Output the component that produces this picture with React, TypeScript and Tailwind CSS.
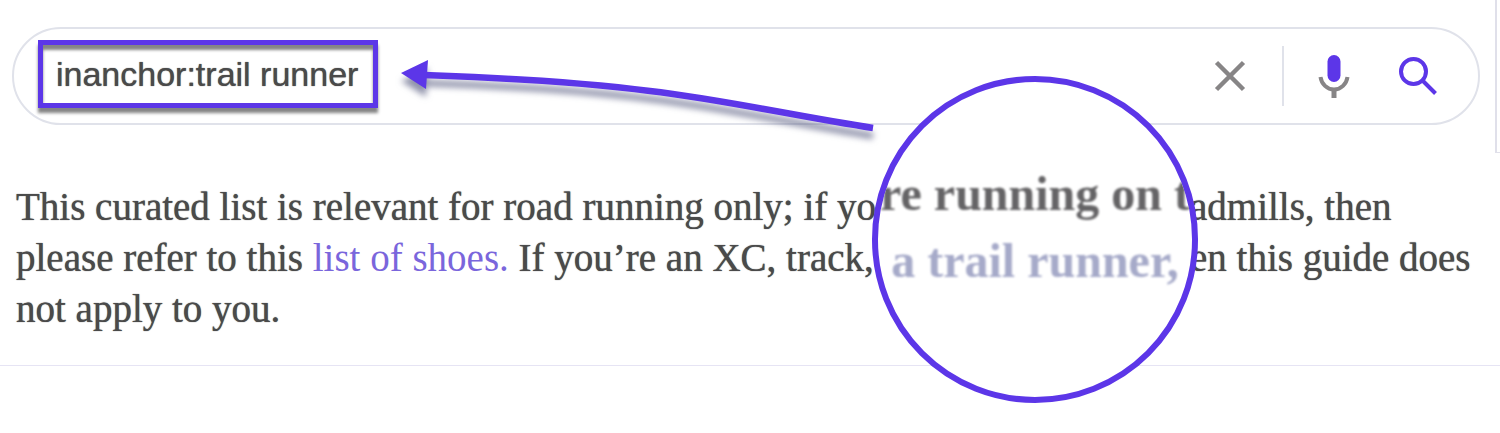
import React from "react";

function ClearIcon() {
  return (
    <svg viewBox="0 0 32 32" className="size-8" fill="none" stroke="#878586" strokeWidth="4.500" aria-hidden="true">
      <path d="M2.500 2.500 29.500 29.500M29.500 2.500 2.500 29.500" />
    </svg>
  );
}

function MicIcon() {
  return (
    <svg viewBox="0 0 32 46" className="h-[46px] w-8" fill="none" aria-hidden="true">
      <rect x="9.500" y="2" width="13" height="27" rx="6.500" fill="#5c36e8" />
      <path d="M2.500 24C3.500 31 9 36.500 16 36.500S28.500 31 29.500 24" stroke="#878586" strokeWidth="4" />
      <path d="M16 36v9" stroke="#878586" strokeWidth="5" />
    </svg>
  );
}

function SearchIcon() {
  return (
    <svg viewBox="0 0 40 40" className="size-10" fill="none" stroke="#5c36e8" strokeWidth="4" aria-hidden="true">
      <circle cx="15.500" cy="15.500" r="12.500" />
      <path d="M24.500 24.500 37.500 37.500" />
    </svg>
  );
}

function SearchBar() {
  return (
    <form
      role="search"
      className="flex h-[98px] items-center rounded-full border-2 border-[#e0e2ea] pl-6 pr-10"
      onSubmit={(event) => event.preventDefault()}
    >
      <div className="flex flex-1 items-center self-stretch pb-1">
        <input
          type="text"
          aria-label="Search"
          defaultValue="inanchor:trail runner"
          className="h-[68px] w-[340px] border-[5px] border-[#5c36e8] bg-white pl-[13px] text-[34px] text-[#4a4a4a] shadow-[0_5px_3px_#858585,inset_0_5px_3px_#858585] outline-none [text-shadow:0_0_1px_#4a4a4a]"
        />
      </div>
      <div className="flex items-center">
        <button type="button" aria-label="Clear">
          <ClearIcon />
        </button>
        <div className="ml-9 mr-[34px] h-[60px] w-0.5 bg-[#e0e2ea]" />
        <button type="button" aria-label="Search by voice">
          <MicIcon />
        </button>
        <button type="submit" aria-label="Submit search" className="ml-12">
          <SearchIcon />
        </button>
      </div>
    </form>
  );
}

function Arrow() {
  return (
    <svg
      viewBox="0 0 480 80"
      className="absolute left-[400px] top-[56px] h-20 w-[480px] drop-shadow-[0_8px_3px_rgba(70,75,115,0.6)]"
      fill="none"
      aria-hidden="true"
    >
      <path d="M24 19C110 22 190 27 250 35C320 43 395 60 473 72" stroke="#5c36e8" strokeWidth="6.500" />
      <path d="M1 17 28 4 26 33Z" fill="#5c36e8" />
    </svg>
  );
}

function Lens() {
  return (
    <div className="absolute left-[872px] top-[76px] h-[327px] w-[326px] overflow-hidden rounded-full border-[6px] border-[#5c36e8] bg-white pt-[78px] font-['Liberation_Serif',serif] text-[48px] font-bold leading-[67px]">
      <div className="flex justify-center whitespace-nowrap text-[#656466] blur-[1px]">re running on t</div>
      <div className="flex justify-center whitespace-nowrap text-[#a6aac9] blur-[1px]">a trail runner,</div>
    </div>
  );
}

export default function App() {
  return (
    <main className="relative min-h-screen overflow-hidden bg-white font-['Liberation_Sans',sans-serif]">
      <div className="flex">
        <div className="flex-1 pb-7 pl-3 pr-[15px] pt-[27px]">
          <SearchBar />
        </div>
        <aside className="w-[5px] border-b border-l-2 border-[#e0e0ea]" />
      </div>
      <article className="border-b border-[#e6e4f4] pb-[31px] pl-4 pt-7 font-['Liberation_Serif',serif] text-[39px] leading-[51px] text-[#4a4a4a] [text-shadow:0_0_1px_#4a4a4a]">
        <p className="grid grid-cols-[1174px_1fr] whitespace-nowrap">
          <span>This curated list is relevant for road running only; if yo</span>
          <span>admills, then</span>
          <span>
            please refer to this{" "}
            <a href="#shoes" className="text-[#7a66dc] [text-shadow:none]">
              list of shoes.
            </a>{" "}
            If you’re an XC, track,
          </span>
          <span>en this guide does</span>
          <span>not apply to you.</span>
        </p>
      </article>
      <Arrow />
      <Lens />
    </main>
  );
}
